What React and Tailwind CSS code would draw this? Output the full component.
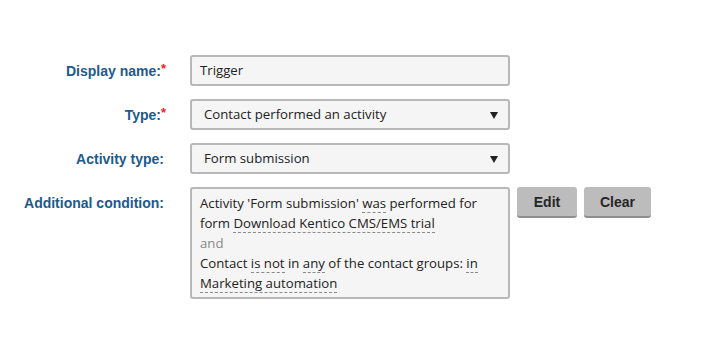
export default function App() {
  const field = 'h-[31px] w-[320px] rounded-[3px] border-2 border-[#b8b8b8] bg-[#f5f5f5] pt-px text-[#222]';
  const label = 'w-[166px] h-[31px] shrink-0 pt-px text-right font-bold text-[14px] text-[#1d5a8c] leading-[31px]';
  const dotted = 'border-b border-dashed border-[#8a8a8a]';
  const btn = 'h-[31px] rounded-[3px] border-b-2 border-[#8f8f8f] bg-[#bdbcbc] pt-[2px] font-bold text-[14px] text-[#262626]';

  const Arrow = () => (
    <svg width="8" height="7" viewBox="0 0 8 7" className="shrink-0">
      <path d="M0 0 H8 L4 7 Z" fill="#222" />
    </svg>
  );

  return (
    <div className="w-[701px] h-[364px] bg-white pt-[55px] font-['Liberation_Sans',Arial,sans-serif]">
      <div className="flex flex-col gap-[13px]">
        <div className="flex items-start gap-[24px]">
          <div className={label}>
            Display name:<span className="text-[#e22] align-top text-[13px] leading-[26px]">*</span>
          </div>
          <div className={`${field} flex items-center px-[8px] font-['Open_Sans',sans-serif] text-[13.2px]`}>Trigger</div>
        </div>

        <div className="flex items-start gap-[24px]">
          <div className={label}>
            Type:<span className="text-[#e22] align-top text-[13px] leading-[26px]">*</span>
          </div>
          <div className={`${field} flex items-center justify-between pl-[12px] pr-[10px] font-['Open_Sans',sans-serif] text-[13.2px]`}>
            <span>Contact performed an activity</span>
            <Arrow />
          </div>
        </div>

        <div className="flex items-start gap-[24px]">
          <div className={`${label} pr-[2px]`}>Activity type:</div>
          <div className={`${field} flex items-center justify-between pl-[12px] pr-[10px] font-['Open_Sans',sans-serif] text-[13.2px]`}>
            <span>Form submission</span>
            <Arrow />
          </div>
        </div>

        <div className="flex items-start gap-[24px]">
          <div className={`${label} pr-[2px] leading-[28px]`}>Additional condition:</div>
          <div className="w-[320px] h-[112px] rounded-[3px] border-2 border-[#b8b8b8] bg-[#f5f5f5] px-[8px] pt-[4px] font-['Open_Sans',sans-serif] text-[13.2px] leading-[20px] text-[#222]">
            <div>
              Activity 'Form submission' <span className={dotted}>was</span> performed for
            </div>
            <div>
              form <span className={dotted}>Download Kentico CMS/EMS trial</span>
            </div>
            <div className="text-[#888]">and</div>
            <div>
              Contact <span className={dotted}>is not</span> in <span className={dotted}>any</span> of the contact groups: <span className={dotted}>in</span>
            </div>
            <div>
              <span className={dotted}>Marketing automation</span>
            </div>
          </div>
          <div className="flex gap-[7px] -ml-[17px]">
            <button className={`${btn} w-[60px]`}>Edit</button>
            <button className={`${btn} w-[67px]`}>Clear</button>
          </div>
        </div>
      </div>
    </div>
  );
}
